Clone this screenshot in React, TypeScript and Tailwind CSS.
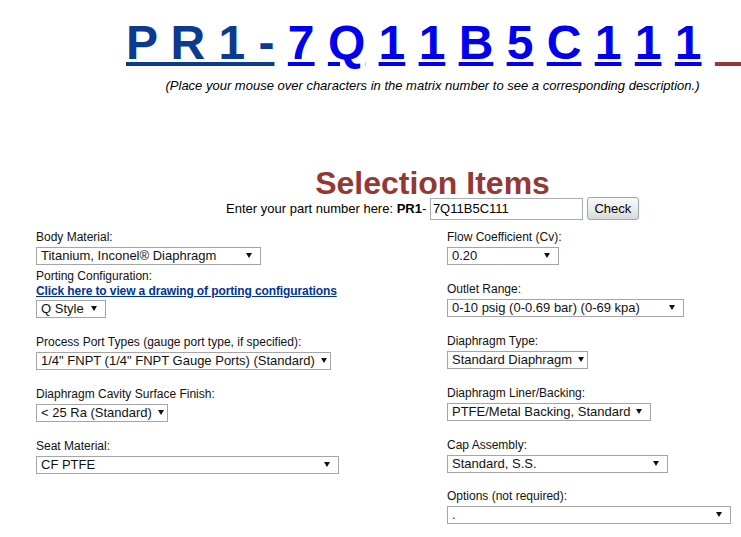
import React from "react";

type Field = {
  label: string;
  value: string;
  w: string;
  gap: string;
  link?: string;
};

// left side of the matrix form
const leftFields: Field[] = [
  { label: "Body Material:", value: "Titanium, Inconel® Diaphragm", w: "w-[225px]", gap: "" },
  {
    label: "Porting Configuration:",
    value: "Q Style",
    w: "w-[70px]",
    gap: "mt-[4px]",
    link: "Click here to view a drawing of porting configurations",
  },
  {
    label: "Process Port Types (gauge port type, if specified):",
    value: '1/4" FNPT (1/4" FNPT Gauge Ports) (Standard)',
    w: "w-[295px]",
    gap: "mt-[17px]",
  },
  { label: "Diaphragm Cavity Surface Finish:", value: "< 25 Ra (Standard)", w: "w-[132px]", gap: "mt-[17px]" },
  { label: "Seat Material:", value: "CF PTFE", w: "w-[303px]", gap: "mt-[17px]" },
];

const rightFields: Field[] = [
  { label: "Flow Coefficient (Cv):", value: "0.20", w: "w-[112px]", gap: "" },
  { label: "Outlet Range:", value: "0-10 psig (0-0.69 bar) (0-69 kpa)", w: "w-[237px]", gap: "mt-[17px]" },
  { label: "Diaphragm Type:", value: "Standard Diaphragm", w: "w-[141px]", gap: "mt-[17px]" },
  { label: "Diaphragm Liner/Backing:", value: "PTFE/Metal Backing, Standard", w: "w-[204px]", gap: "mt-[17px]" },
  { label: "Cap Assembly:", value: "Standard, S.S.", w: "w-[221px]", gap: "mt-[17px]" },
  { label: "Options (not required):", value: ".", w: "w-[284px]", gap: "mt-[16px]" },
];

const matrix = ["7", "Q", "1", "1", "B", "5", "C", "1", "1", "1"];

function FakeSelect({ value, w }: { value: string; w: string }) {
  return (
    <div
      className={`flex h-[18px] items-center justify-between border border-[#a5a5a5] bg-white pl-[4px] pr-[8px] text-[13px] leading-[16px] text-[#111] ${w}`}
    >
      <span className="whitespace-nowrap">{value}</span>
      <svg width="6" height="5" viewBox="0 0 6 5" className="ml-[6px] mb-[2px] shrink-0">
        <path d="M0 0h6L3 5z" fill="#111" />
      </svg>
    </div>
  );
}

function FieldBlock({ f }: { f: Field }) {
  return (
    <div className={`flex flex-col ${f.gap}`}>
      <div className="text-[12px] leading-[15px] text-[#111]">{f.label}</div>
      {f.link && (
        <a
          href="#"
          className="text-[12px] leading-[15px] font-bold tracking-[-0.11px] text-[#003399] underline whitespace-nowrap"
        >
          {f.link}
        </a>
      )}
      <div className={f.link ? "mt-[1px]" : "mt-[2px]"}>
        <FakeSelect value={f.value} w={f.w} />
      </div>
    </div>
  );
}

export default function App() {
  return (
    <div className="w-full min-h-[537px] overflow-hidden bg-white font-['Liberation_Sans',Arial,sans-serif] text-black">
      <div className="w-[865px]">
        {/* matrix number */}
        <div className="pt-[19px] pl-[126px] text-[48px] leading-[48px] font-bold whitespace-nowrap">
          <a href="#" className="text-[#0b3a8e] underline">
            P R 1 -
          </a>
          {matrix.map((c, i) => (
            <React.Fragment key={i}>
              {" "}
              <a href="#" className="text-[#0000ee] underline">
                {c}
              </a>
            </React.Fragment>
          ))}{" "}
          <span className="text-[#953735] underline">{"\u00a0\u00a0"}</span>
        </div>

        <div className="mt-[11px] text-center text-[13px] leading-[15px] italic">
          (Place your mouse over characters in the matrix number to see a corresponding description.)
        </div>

        <h1 className="mt-[77px] text-center text-[32px] leading-[27px] font-bold text-[#953735]">
          Selection Items
        </h1>

        {/* part number entry */}
        <div className="flex h-[23px] items-center justify-center text-[13px] leading-[15px]">
          <span className="whitespace-nowrap">
            Enter your part number here: <b>PR1</b>-&nbsp;
          </span>
          <input
            readOnly
            value="7Q11B5C111"
            className="h-[22px] w-[153px] border border-[#a9adb3] px-[2px] text-[13px] outline-none"
          />
          <button className="ml-[4px] h-[23px] w-[52px] rounded-[3px] border border-[#8fa9cc] bg-gradient-to-b from-[#f8f8f8] via-[#ececec] to-[#d9d9d9] text-[13px]">
            Check
          </button>
        </div>

        {/* form columns */}
        <div className="mt-[10px] grid grid-cols-[411px_1fr] pl-[36px]">
          <div className="flex flex-col">
            {leftFields.map((f) => (
              <FieldBlock key={f.label} f={f} />
            ))}
          </div>
          <div className="flex flex-col">
            {rightFields.map((f) => (
              <FieldBlock key={f.label} f={f} />
            ))}
          </div>
        </div>
      </div>
    </div>
  );
}
